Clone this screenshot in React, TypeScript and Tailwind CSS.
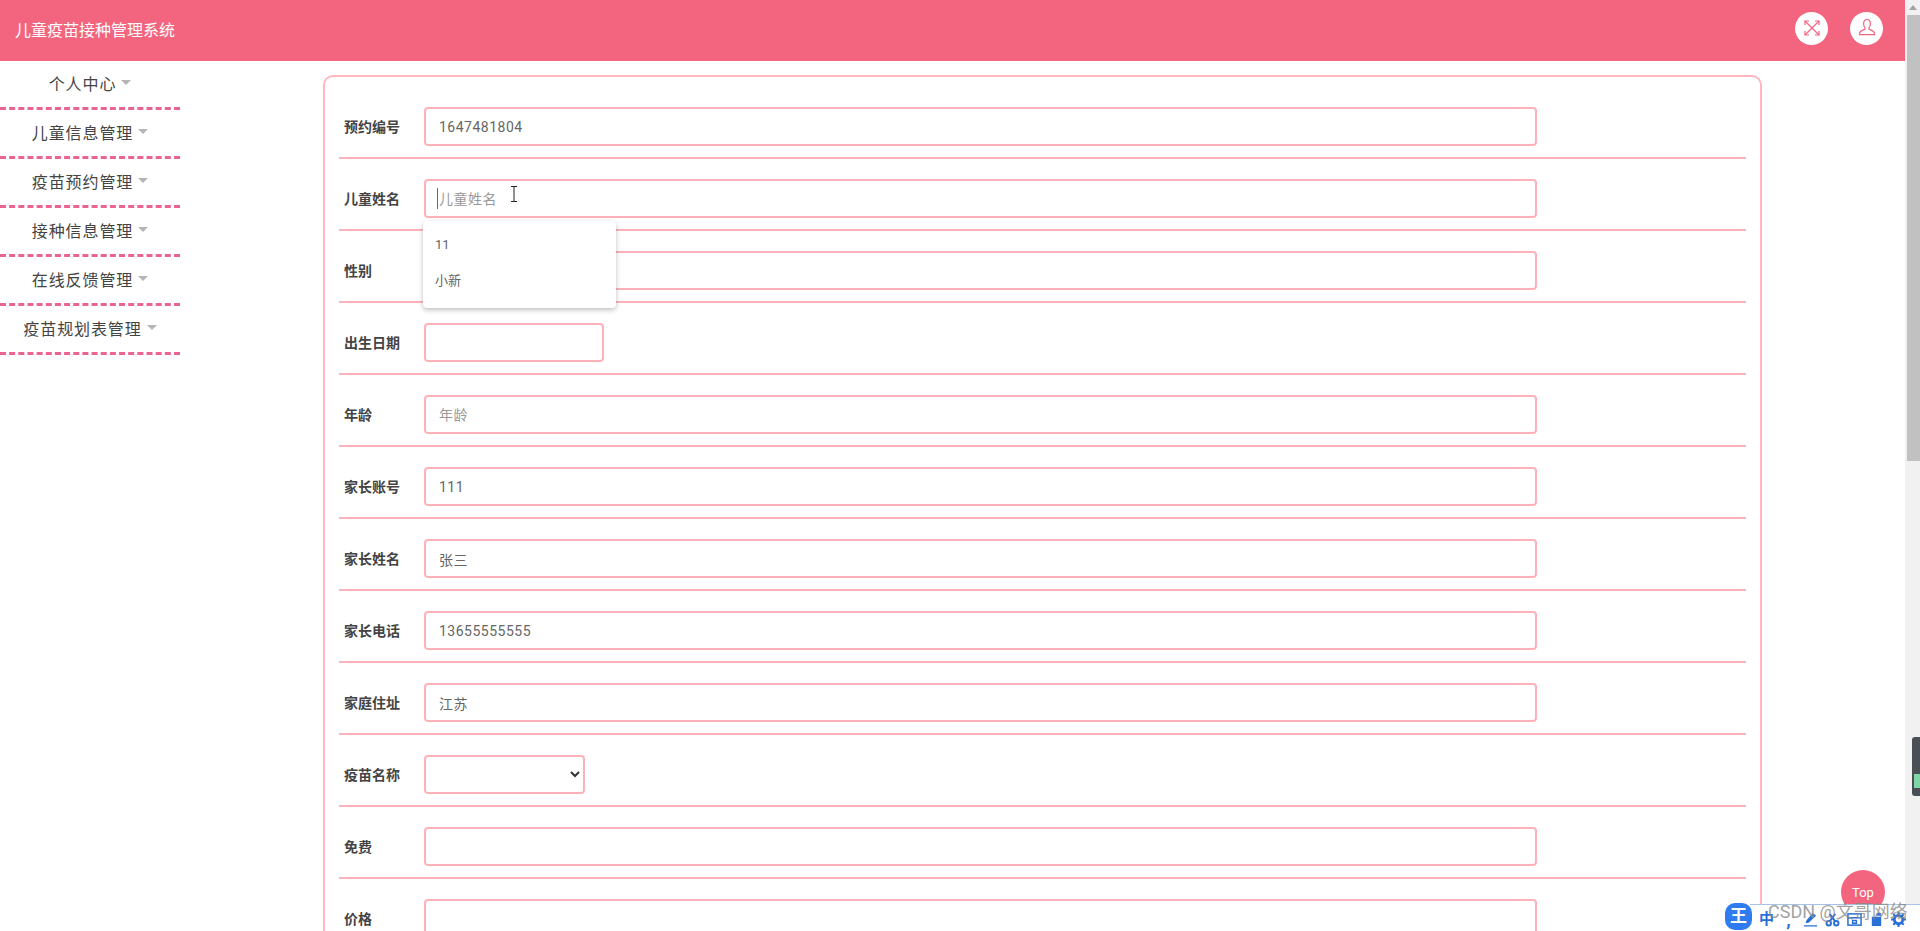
const menus = ['个人中心', '儿童信息管理', '疫苗预约管理', '接种信息管理', '在线反馈管理', '疫苗规划表管理'];

type Field = {
  label: string;
  value?: string;
  placeholder?: string;
  width?: string;
  select?: boolean;
  caret?: boolean;
};

const fields: Field[] = [
  { label: '预约编号', value: '1647481804' },
  { label: '儿童姓名', placeholder: '儿童姓名', caret: true },
  { label: '性别' },
  { label: '出生日期', width: 'w-[180px]' },
  { label: '年龄', placeholder: '年龄' },
  { label: '家长账号', value: '111' },
  { label: '家长姓名', value: '张三' },
  { label: '家长电话', value: '13655555555' },
  { label: '家庭住址', value: '江苏' },
  { label: '疫苗名称', select: true },
  { label: '免费' },
  { label: '价格' },
];

function FormRow({ field }: { field: Field }) {
  return (
    <div className="flex items-center pt-[20px] pb-[11px] border-b-2 border-[#ffb1b9]">
      <label className="w-[85px] pl-[5px] mt-[1px] text-[14px] font-bold text-[#444]">{field.label}</label>
      {field.select ? (
        <select className="w-[161px] h-[39px] pl-2 pr-1 border-2 border-[#ffb1b9] rounded-[4px] bg-white text-[14px] text-[#333]" />
      ) : (
        <div className={`relative h-[39px] ${field.width ?? 'w-[1113px]'}`}>
          <input
            readOnly
            value={field.value ?? ''}
            placeholder={field.placeholder}
            className="w-full h-full px-[13px] border-2 border-[#ffb1b9] rounded-[4px] bg-white text-[14px] tracking-[0.5px] text-[#666] placeholder:text-[#999] outline-none"
          />
          {field.caret && <span className="absolute left-[13px] top-[9px] w-px h-[21px] bg-[#666]" />}
        </div>
      )}
    </div>
  );
}

export default function App() {
  return (
    <div className="flex h-screen overflow-hidden bg-white font-['Roboto','Noto_Sans_CJK_SC',sans-serif]">
      <div className="relative w-[1905px] shrink-0">
        {/* Header */}
        <div className="flex items-center justify-between h-[61px] pl-[15px] pr-[22px] bg-[#f3657f]">
          <span className="text-[16px] text-white">儿童疫苗接种管理系统</span>
          <div className="flex items-center gap-[22px] -mt-[5px]">
            <div className="flex items-center justify-center w-[33px] h-[33px] rounded-full bg-white">
              <svg width="18" height="18" viewBox="0 0 18 18" fill="none" stroke="#f3657f" strokeWidth="1.2">
                <path d="M2 2 16 16M16 2 2 16" />
                <path d="M2 6V2h4M12 2h4v4M16 12v4h-4M6 16H2v-4" />
              </svg>
            </div>
            <div className="flex items-center justify-center w-[33px] h-[33px] rounded-full bg-white">
              <svg width="20" height="20" viewBox="0 0 20 20" fill="none" stroke="#f3657f" strokeWidth="1.2">
                <path d="M10 1.500c-2.200 0-3.400 1.800-3.400 4.200 0 1.700.6 3 1.400 3.900v1.600c-2 .9-5 1.800-5.400 3.600v1.900h14.800v-1.900c-.4-1.800-3.400-2.700-5.400-3.600V9.600c.8-.9 1.400-2.200 1.400-3.900 0-2.400-1.200-4.200-3.400-4.200z" />
              </svg>
            </div>
          </div>
        </div>

        <div className="flex">
          {/* Sidebar */}
          <div className="w-[180px] shrink-0">
            {menus.map((name) => (
              <div
                key={name}
                className="flex items-center justify-center gap-[5px] h-[49px] pt-[1px] border-b-[3px] border-dashed border-[#ea6490] text-[16px] tracking-[0.9px] text-[#444]"
              >
                <span>{name}</span>
                <span className="mb-[4px] border-x-[5px] border-t-[5px] border-x-transparent border-t-[#b5b5b5]" />
              </div>
            ))}
          </div>

          {/* Form panel */}
          <div className="ml-[143px] mt-[14px] w-[1439px] px-[14px] pt-[10px] border-2 border-[#ffb6c1] rounded-[10px]">
            {fields.map((field) => (
              <FormRow key={field.label} field={field} />
            ))}
          </div>
        </div>

        {/* Autocomplete list */}
        <div className="absolute left-[423px] top-[221px] w-[193px] h-[87px] pt-[9px] rounded-[4px] bg-white shadow-[0_2px_5px_rgba(0,0,0,0.25)] text-[13px] text-[#666]">
          <div className="h-[36px] pl-3 leading-[30px]">11</div>
          <div className="h-[36px] pl-3 leading-[30px]">小新</div>
        </div>

        {/* Text cursor */}
        <svg className="absolute left-[510px] top-[186px]" width="8" height="16" viewBox="0 0 8 16" fill="none" stroke="#222" strokeWidth="1">
          <path d="M1 .5h6M4 .5v15M1 15.500h6" />
        </svg>

        {/* Back to top */}
        <div className="absolute left-[1841px] top-[870px] flex items-center justify-center w-[44px] h-[44px] rounded-full bg-[#f3657f] text-[13px] text-white">
          <span className="mt-[2px]">Top</span>
        </div>
      </div>

      {/* Scrollbar */}
      <div className="flex flex-col items-end w-[15px] shrink-0 bg-[#f1f1f1]">
        <div className="flex items-center justify-center w-full h-[15px]">
          <span className="border-x-[4px] border-b-[5px] border-x-transparent border-b-[#a3a3a3]" />
        </div>
        <div className="w-[13px] h-[446px] bg-[#c1c1c1]" />
      </div>

      {/* Side tab */}
      <div className="absolute left-[1912px] top-[737px] flex flex-col justify-end w-2 h-[59px] rounded-l-[3px] bg-[#4a4f55] pb-2">
        <div className="h-[14px] ml-[2px] bg-[#7fd6a8]" />
      </div>

      {/* IME toolbar */}
      <div className="absolute left-[1750px] top-[904px] flex items-center gap-[7px] w-[170px] h-[27px] pl-[9px] pt-[3px] border-t border-[#a9c3e6] bg-white text-[#2a6fd8]">
        <span className="w-[15px] text-[15px] font-bold leading-none">中</span>
        <span className="w-[15px] text-center text-[18px] font-bold leading-none">,</span>
        <svg width="15" height="15" viewBox="0 0 16 16" fill="#2a6fd8">
          <path d="M10.500 1 14 4 6 11.500 3 12l.5-3zM1 14h14v1.500H1z" />
        </svg>
        <svg width="15" height="15" viewBox="0 0 16 16" fill="none" stroke="#2a6fd8" strokeWidth="2">
          <circle cx="4" cy="12" r="2.400" />
          <circle cx="12" cy="12" r="2.400" />
          <path d="M5 10 11 2M11 10 5 2" />
        </svg>
        <svg width="15" height="15" viewBox="0 0 16 16" fill="none" stroke="#2a6fd8" strokeWidth="1.600">
          <rect x="1" y="2" width="14" height="12" />
          <path d="M1 6h14M6 9h4v3H6z" />
        </svg>
        <svg width="15" height="15" viewBox="0 0 16 16" fill="#2a6fd8">
          <path d="M3 5h10v10H3zM8 1h5v3H8z" />
        </svg>
        <svg width="15" height="15" viewBox="0 0 16 16" fill="none" stroke="#2a6fd8" strokeWidth="3">
          <circle cx="8" cy="8" r="4.500" />
          <path d="M8 0v3M8 13v3M0 8h3M13 8h3M2.500 2.500l2 2M11.500 11.500l2 2M13.500 2.500l-2 2M4.500 11.500l-2 2" strokeWidth="2.200" />
        </svg>
      </div>
      <div className="absolute left-[1725px] top-[903px] flex items-center justify-center w-[27px] h-[27px] rounded-[10px] bg-[#2f7bf0] text-[17px] font-bold leading-none text-white">
        王
      </div>

      {/* Watermark */}
      <div className="absolute left-[1768px] top-[900px] text-[18px] leading-[24px] whitespace-nowrap text-[#8a8a8a]/80">
        CSDN @文哥网络
      </div>
    </div>
  );
}
